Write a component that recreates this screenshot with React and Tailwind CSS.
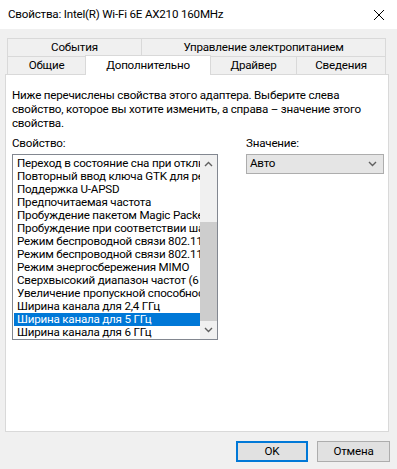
import React from "react";

const items = [
  "Переход в состояние сна при отключении",
  "Повторный ввод ключа GTK для режима",
  "Поддержка U-APSD",
  "Предпочитаемая частота",
  "Пробуждение пакетом Magic Packet",
  "Пробуждение при соответствии шаблону",
  "Режим беспроводной связи 802.11a/b/g",
  "Режим беспроводной связи 802.11n/ac/ax",
  "Режим энергосбережения MIMO",
  "Сверхвысокий диапазон частот (6 ГГц)",
  "Увеличение пропускной способности",
  "Ширина канала для 2,4 ГГц",
  "Ширина канала для 5 ГГц",
  "Ширина канала для 6 ГГц",
];

const Chevron = ({ up = false }) => (
  <svg width="9" height="6" viewBox="0 0 9 6">
    <path
      d={up ? "M1 5 L4.5 1.5 L8 5" : "M1 1 L4.5 4.5 L8 1"}
      fill="none"
      stroke="#606060"
      strokeWidth="1.4"
    />
  </svg>
);

const App = () => {
  return (
    <div
      className="w-[397px] h-[469px] bg-[#f0f0f0] flex flex-col text-[11.6px] tracking-[-0.2px] text-black overflow-hidden"
      style={{ fontFamily: 'Roboto, "Noto Sans", sans-serif' }}
    >
      {/* title bar */}
      <div className="h-[29px] bg-white flex items-center justify-between pl-[8px] pr-[6px]">
        <span className="leading-none">Свойства: Intel(R) Wi-Fi 6E AX210 160MHz</span>
        <svg width="12" height="12" viewBox="0 0 12 12" className="mr-[6px]">
          <path d="M1 1 L11 11 M11 1 L1 11" stroke="#000" strokeWidth="1" />
        </svg>
      </div>

      {/* tabs */}
      <div className="mt-[9px] ml-[7px] flex h-[18px]">
        <div className="w-[135px] border border-[#d9d9d9] border-b-0 flex items-center justify-center">
          События
        </div>
        <div className="w-[244px] border border-[#d9d9d9] border-b-0 border-l-0 flex items-center justify-center">
          Управление электропитанием
        </div>
      </div>
      <div className="ml-[7px] flex h-[18px] items-end border-t border-[#d9d9d9] w-[379px]">
        <div className="w-[78px] h-[17px] border-l border-[#d9d9d9] flex items-center justify-center">
          Общие
        </div>
        <div className="relative z-10 w-[126px] h-[20px] -mb-[1px] bg-white border border-b-0 border-[#d9d9d9] flex items-start justify-center pt-[1px]">
          Дополнительно
        </div>
        <div className="w-[85px] h-[17px] flex items-center justify-center">
          Драйвер
        </div>
        <div className="w-[90px] h-[17px] border-l border-r border-[#d9d9d9] flex items-center justify-center">
          Сведения
        </div>
      </div>

      {/* panel */}
      <div className="ml-[5px] w-[384px] h-[358px] bg-white border border-[#d9d9d9] pl-[6px] pt-[13px]">
        <p className="leading-[14px] w-[350px]">
          Ниже перечислены свойства этого адаптера. Выберите слева
          свойство, которое вы хотите изменить, а справа – значение этого
          свойства.
        </p>

        <div className="mt-[7px] flex">
          <div className="w-[206px]">
            <div className="leading-[13px] h-[13px]">Свойство:</div>
            <div className="mt-[4px] h-[186px] border border-[#828790] flex">
              <div className="flex-1 pl-[1px] pt-[2px] overflow-hidden">
                {items.map((it) => {
                  const sel = it === "Ширина канала для 5 ГГц";
                  return (
                    <div
                      key={it}
                      className={
                        "h-[13px] leading-[13px] pl-[3px] whitespace-nowrap overflow-hidden " +
                        (sel ? "bg-[#0078d7] text-white" : "")
                      }
                    >
                      {it}
                    </div>
                  );
                })}
              </div>
              <div className="w-[17px] bg-[#f0f0f0] flex flex-col">
                <div className="h-[17px] flex items-center justify-center">
                  <Chevron up />
                </div>
                <div className="h-[50px]" />
                <div className="h-[99px] bg-[#cdcdcd]" />
                <div className="h-[17px] flex items-center justify-center">
                  <Chevron />
                </div>
              </div>
            </div>
          </div>

          <div className="ml-[28px] w-[138px]">
            <div className="leading-[13px] h-[13px]">Значение:</div>
            <div className="mt-[4px] h-[20px] border border-[#adadad] bg-[#e5e5e5] flex items-center justify-between pl-[3px] pr-[6px]">
              <span>Авто</span>
              <Chevron />
            </div>
          </div>
        </div>
      </div>

      {/* buttons */}
      <div className="mt-[9px] flex justify-end gap-[9px] pr-[7px]">
        <button className="w-[72px] h-[21px] border-2 border-[#0078d7] bg-[#e1e1e1] flex items-center justify-center">
          OK
        </button>
        <button className="w-[73px] h-[21px] border border-[#adadad] bg-[#e1e1e1] flex items-center justify-center">
          Отмена
        </button>
      </div>
    </div>
  );
};

export default App;
